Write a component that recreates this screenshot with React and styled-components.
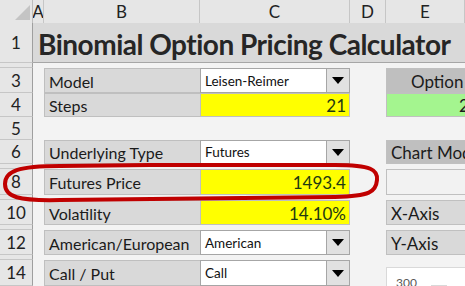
import styled, { createGlobalStyle } from "styled-components";

const GlobalStyle = createGlobalStyle`
  html, body {
    margin: 0;
    padding: 0;
    background: #f3f3f3;
    overflow: hidden;
  }
  body {
    font-family: Lato, "Open Sans", sans-serif;
    color: #1b1b1b;
  }
`;

const COLS = "33px 11px 156px 150px 36px 1fr";

const inputs = [
  { row: 3, h: 25, label: "Model", kind: "drop", value: "Leisen-Reimer", side: { text: "Option", fill: "#bfbfbf", pad: 24 } },
  { row: 4, h: 24, label: "Steps", kind: "num", value: "21", side: { text: "2", fill: "#a4f58f", pad: 72 } },
  { row: 5, h: 23 },
  { row: 6, h: 24, label: "Underlying Type", kind: "drop", value: "Futures", side: { text: "Chart Mod", fill: "#bfbfbf", pad: 4 } },
  { row: 7, h: 5, spacer: true },
  { row: 8, h: 26, label: "Futures Price", kind: "num", value: "1493.4", side: { text: "", fill: "#f2f2f2", pad: 4 } },
  { row: 9, h: 5, spacer: true },
  { row: 10, h: 25, label: "Volatility", kind: "num", value: "14.10%", side: { text: "X-Axis", fill: "#d9d9d9", pad: 4 } },
  { row: 11, h: 5, spacer: true },
  { row: 12, h: 25, label: "American/European", kind: "drop", value: "American", side: { text: "Y-Axis", fill: "#d9d9d9", pad: 4 } },
  { row: 13, h: 5, spacer: true },
  { row: 14, h: 26, label: "Call / Put", kind: "drop", value: "Call", chart: true },
];

export default function App() {
  return (
    <>
      <GlobalStyle />
      <Sheet>
        <Row h={23}>
          <Corner>
            <svg width="33" height="23">
              <polygon points="30,5 30,20 15,20" fill="#c4c4c4" />
            </svg>
          </Corner>
          {["A", "B", "C", "D", "E"].map((c) => (
            <ColHead key={c}>{c}</ColHead>
          ))}
        </Row>

        <Row h={40}>
          <RowHead>1</RowHead>
          <Title>Binomial Option Pricing Calculator</Title>
        </Row>

        <Row h={5}>
          <RowHead />
        </Row>

        {inputs.map((r) => (
          <Row key={r.row} h={r.h}>
            <RowHead>{r.spacer ? "" : r.row}</RowHead>
            <Blank />
            {r.label ? <Label>{r.label}</Label> : <Blank />}
            {r.kind === "num" && <Input>{r.value}</Input>}
            {r.kind === "drop" && (
              <Drop>
                <span>{r.value}</span>
                <DropBtn>
                  <svg width="12" height="7">
                    <polygon points="0,0 12,0 6,7" fill="#000" />
                  </svg>
                </DropBtn>
              </Drop>
            )}
            {!r.kind && <Blank />}
            <Blank />
            {r.side && (
              <Side fill={r.side.fill} pad={r.side.pad}>
                {r.side.text}
              </Side>
            )}
            {r.chart && (
              <ChartCell>
                <ChartBox>
                  <span>300</span>
                  <Tick />
                </ChartBox>
              </ChartCell>
            )}
            {!r.side && !r.chart && <Blank />}
          </Row>
        ))}

        <Ring width="465" height="286" viewBox="0 0 465 286">
          <path
            d="M 150 165 L 335 165 C 372 165, 378 170, 377 180 C 376 192, 370 196, 335 197 L 60 200 C 18 201, 5 197, 5 184 C 5 171, 18 166, 60 166 Z"
            fill="none"
            stroke="#c00000"
            strokeWidth="4"
          />
        </Ring>
      </Sheet>
    </>
  );
}

const Sheet = styled.div`
  position: relative;
  width: 465px;
  height: 286px;
  overflow: hidden;
  background: #f3f3f3;
`;

const Row = styled.div`
  display: grid;
  grid-template-columns: ${COLS};
  height: ${(p) => p.h}px;
`;

const Corner = styled.div`
  background: #e6e6e6;
  border-right: 1px solid #bdbdbd;
  border-bottom: 1px solid #9f9f9f;
  box-sizing: border-box;
  svg {
    display: block;
  }
`;

const ColHead = styled.div`
  background: #e6e6e6;
  border-right: 1px solid #c6c6c6;
  border-bottom: 1px solid #9f9f9f;
  box-sizing: border-box;
  display: flex;
  align-items: center;
  justify-content: center;
  overflow: hidden;
  font-size: 17px;
  color: #222;
`;

const RowHead = styled.div`
  background: #e6e6e6;
  border-right: 1px solid #9f9f9f;
  border-bottom: 1px solid #c6c6c6;
  box-sizing: border-box;
  display: flex;
  align-items: center;
  justify-content: center;
  font-size: 17px;
  color: #222;
  overflow: hidden;
`;

const Title = styled.div`
  grid-column: 2 / -1;
  background: #d9d9d9;
  border-bottom: 1px solid #a6a6a6;
  box-sizing: border-box;
  display: flex;
  align-items: center;
  padding: 2px 0 0 5px;
  white-space: nowrap;
  overflow: hidden;
  font-weight: 700;
  font-size: 28px;
  letter-spacing: -0.5px;
  color: #262626;
`;

const Blank = styled.div``;

const Label = styled.div`
  background: #d9d9d9;
  border: 1px solid #bfbfbf;
  border-right: none;
  box-sizing: border-box;
  display: flex;
  align-items: center;
  padding: 1px 0 0 4px;
  font-size: 16px;
  color: #1b1b1b;
  white-space: nowrap;
`;

const Input = styled.div`
  background: #ffff00;
  border: 1px solid #bfbfbf;
  box-sizing: border-box;
  display: flex;
  align-items: center;
  justify-content: flex-end;
  padding: 1px 3px 0 0;
  font-size: 17px;
  color: #1e3a12;
`;

const Drop = styled.div`
  background: #fff;
  border: 1px solid #a6a6a6;
  box-sizing: border-box;
  display: flex;
  align-items: center;
  justify-content: space-between;
  padding-left: 4px;
  font-size: 13.5px;
  color: #111;
`;

const DropBtn = styled.div`
  width: 22px;
  align-self: stretch;
  background: #e1e1e1;
  border-left: 1px solid #a6a6a6;
  display: flex;
  align-items: center;
  justify-content: center;
`;

const Side = styled.div`
  background: ${(p) => p.fill};
  border: 1px solid #c0c0c0;
  border-right: none;
  box-sizing: border-box;
  display: flex;
  align-items: center;
  padding-left: ${(p) => p.pad}px;
  padding-top: 1px;
  font-size: 17px;
  white-space: nowrap;
  overflow: hidden;
`;

const ChartCell = styled.div`
  padding-top: 7px;
  overflow: hidden;
`;

const ChartBox = styled.div`
  height: 30px;
  background: #fff;
  border: 1px solid #d9d9d9;
  border-right: none;
  box-sizing: border-box;
  display: flex;
  align-items: flex-start;
  gap: 14px;
  padding: 8px 0 0 9px;
  font-size: 12px;
  color: #595959;
  span {
    line-height: 14px;
  }
`;

const Tick = styled.div`
  width: 16px;
  height: 1px;
  background: #d9d9d9;
  margin-top: 9px;
`;

const Ring = styled.svg`
  position: absolute;
  left: 0;
  top: 0;
  pointer-events: none;
`;
